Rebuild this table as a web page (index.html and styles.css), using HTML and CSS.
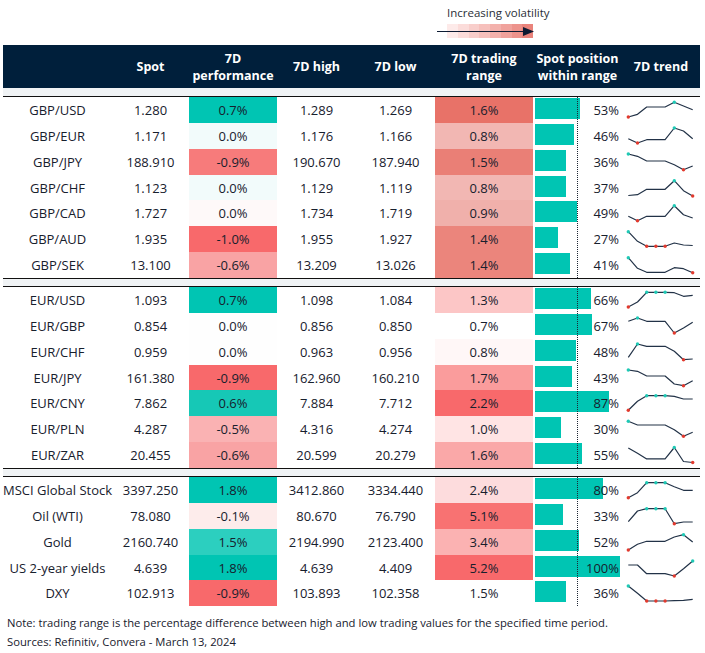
FILE: index.html
```html
<!DOCTYPE html>
<html lang="en">
<head>
<meta charset="utf-8">
<title>FX volatility table</title>
<link rel="stylesheet" href="styles.css">
</head>
<body>
<div class="legend">
  <div class="legend-title">Increasing volatility</div>
  <div class="legend-bar">
    <div class="swatches">
      <span class="s1"></span><span class="s2"></span><span class="s3"></span><span class="s4"></span><span class="s5"></span><span class="s6"></span><span class="s7"></span><span class="s8"></span>
    </div>
    <svg class="arrow" width="97" height="14" viewBox="0 0 97 14"><line x1="0" y1="7.5" x2="88" y2="7.5" stroke="#0d1b33" stroke-width="1.2"/><polygon points="86,3 97,7.5 86,12" fill="#0d1b33"/></svg>
  </div>
</div>

<div class="table">
  <div class="thead">
    <div></div>
    <div>Spot</div>
    <div>7D<br>performance</div>
    <div>7D high</div>
    <div>7D low</div>
    <div>7D trading<br>range</div>
    <div>Spot position<br>within range</div>
    <div>7D trend</div>
  </div>
  <div class="spacer first"></div>

  <div class="group sep">
    <div class="row"><div class="c">GBP/USD</div><div class="c">1.280</div><div class="c" style="background:#00c5b3">0.7%</div><div class="c">1.289</div><div class="c">1.269</div><div class="c" style="background:#e87268">1.6%</div><div class="pos"><span class="bar" style="width:53%"></span><span class="pct">53%</span></div><div class="trend"><svg width="78" height="26" viewBox="0 0 78 26"><polyline points="6.3,20 15.5,17.3 24.7,10 33.9,10 43.1,10 52.3,5.3 61.5,9 70.7,12.7"/><circle class="lo" cx="6.3" cy="20" r="1.7"/><circle class="hi" cx="52.3" cy="5.3" r="1.7"/></svg></div></div>
    <div class="row"><div class="c">GBP/EUR</div><div class="c">1.171</div><div class="c" style="background:#f2fbfb">0.0%</div><div class="c">1.176</div><div class="c">1.166</div><div class="c" style="background:#f2b7b3">0.8%</div><div class="pos"><span class="bar" style="width:46%"></span><span class="pct">46%</span></div><div class="trend"><svg width="78" height="26" viewBox="0 0 78 26"><polyline points="6.3,15.7 15.5,20 24.7,16.7 33.9,16.7 43.1,16.7 52.3,5 61.5,8 70.7,15.7"/><circle class="lo" cx="15.5" cy="20" r="1.7"/><circle class="hi" cx="52.3" cy="5" r="1.7"/></svg></div></div>
    <div class="row"><div class="c">GBP/JPY</div><div class="c">188.910</div><div class="c" style="background:#f77b7b">-0.9%</div><div class="c">190.670</div><div class="c">187.940</div><div class="c" style="background:#ea7f76">1.5%</div><div class="pos"><span class="bar" style="width:36%"></span><span class="pct">36%</span></div><div class="trend"><svg width="78" height="26" viewBox="0 0 78 26"><polyline points="6.3,5 15.5,7.3 24.7,12 33.9,12 43.1,12 52.3,15.7 61.5,20.7 70.7,17"/><circle class="hi" cx="6.3" cy="5" r="1.7"/><circle class="lo" cx="61.5" cy="20.7" r="1.7"/></svg></div></div>
    <div class="row"><div class="c">GBP/CHF</div><div class="c">1.123</div><div class="c" style="background:#f2fbfb">0.0%</div><div class="c">1.129</div><div class="c">1.119</div><div class="c" style="background:#f2b7b3">0.8%</div><div class="pos"><span class="bar" style="width:37%"></span><span class="pct">37%</span></div><div class="trend"><svg width="78" height="26" viewBox="0 0 78 26"><polyline points="6.3,20.5 15.5,19.7 24.7,14.3 33.9,14.3 43.1,14.3 52.3,5.7 61.5,15.7 70.7,21"/><circle class="hi" cx="52.3" cy="5.7" r="1.7"/><circle class="lo" cx="70.7" cy="21" r="1.7"/></svg></div></div>
    <div class="row"><div class="c">GBP/CAD</div><div class="c">1.727</div><div class="c" style="background:#fef9f9">0.0%</div><div class="c">1.734</div><div class="c">1.719</div><div class="c" style="background:#f0b0ab">0.9%</div><div class="pos"><span class="bar" style="width:49%"></span><span class="pct">49%</span></div><div class="trend"><svg width="78" height="26" viewBox="0 0 78 26"><polyline points="6.3,16.3 15.5,20.7 24.7,16.3 33.9,16.3 43.1,16.3 52.3,5.7 61.5,14.7 70.7,18"/><circle class="lo" cx="15.5" cy="20.7" r="1.7"/><circle class="hi" cx="52.3" cy="5.7" r="1.7"/></svg></div></div>
    <div class="row"><div class="c">GBP/AUD</div><div class="c">1.935</div><div class="c" style="background:#f8696b">-1.0%</div><div class="c">1.955</div><div class="c">1.927</div><div class="c" style="background:#eb857c">1.4%</div><div class="pos"><span class="bar" style="width:27%"></span><span class="pct">27%</span></div><div class="trend"><svg width="78" height="26" viewBox="0 0 78 26"><polyline points="6.3,5.7 15.5,15.3 24.7,20.3 33.9,20.3 43.1,20.3 52.3,17 61.5,19 70.7,19.5"/><circle class="hi" cx="6.3" cy="5.7" r="1.7"/><circle class="lo" cx="24.7" cy="20.3" r="1.7"/><circle class="lo" cx="33.9" cy="20.3" r="1.7"/><circle class="lo" cx="43.1" cy="20.3" r="1.7"/></svg></div></div>
    <div class="row"><div class="c">GBP/SEK</div><div class="c">13.100</div><div class="c" style="background:#f9a3a4">-0.6%</div><div class="c">13.209</div><div class="c">13.026</div><div class="c" style="background:#eb857c">1.4%</div><div class="pos"><span class="bar" style="width:41%"></span><span class="pct">41%</span></div><div class="trend"><svg width="78" height="26" viewBox="0 0 78 26"><polyline points="6.3,5.7 15.5,16.3 24.7,20.3 33.9,20.3 43.1,20.3 52.3,15.7 61.5,16.7 70.7,20.8"/><circle class="hi" cx="6.3" cy="5.7" r="1.7"/><circle class="lo" cx="70.7" cy="20.8" r="1.7"/></svg></div></div>
  </div>
  <div class="spacer"></div>

  <div class="group sep">
    <div class="row"><div class="c">EUR/USD</div><div class="c">1.093</div><div class="c" style="background:#00c5b3">0.7%</div><div class="c">1.098</div><div class="c">1.084</div><div class="c" style="background:#fcc6c6">1.3%</div><div class="pos"><span class="bar" style="width:66%"></span><span class="pct">66%</span></div><div class="trend"><svg width="78" height="26" viewBox="0 0 78 26"><polyline points="6.3,20 15.5,15 24.7,5.3 33.9,5.3 43.1,5.3 52.3,5.7 61.5,9.3 70.7,8.3"/><circle class="lo" cx="6.3" cy="20" r="1.7"/><circle class="hi" cx="24.7" cy="5.3" r="1.7"/><circle class="hi" cx="33.9" cy="5.3" r="1.7"/><circle class="hi" cx="43.1" cy="5.3" r="1.7"/></svg></div></div>
    <div class="row"><div class="c">EUR/GBP</div><div class="c">0.854</div><div class="c" style="background:#fefefe">0.0%</div><div class="c">0.856</div><div class="c">0.850</div><div class="c" style="background:#ffffff">0.7%</div><div class="pos"><span class="bar" style="width:67%"></span><span class="pct">67%</span></div><div class="trend"><svg width="78" height="26" viewBox="0 0 78 26"><polyline points="6.3,8.3 15.5,5 24.7,8.3 33.9,8.3 43.1,8.3 52.3,20 61.5,15 70.7,9.3"/><circle class="hi" cx="15.5" cy="5" r="1.7"/><circle class="lo" cx="52.3" cy="20" r="1.7"/></svg></div></div>
    <div class="row"><div class="c">EUR/CHF</div><div class="c">0.959</div><div class="c" style="background:#fefefe">0.0%</div><div class="c">0.963</div><div class="c">0.956</div><div class="c" style="background:#fff7f7">0.8%</div><div class="pos"><span class="bar" style="width:48%"></span><span class="pct">48%</span></div><div class="trend"><svg width="78" height="26" viewBox="0 0 78 26"><polyline points="6.3,18.3 15.5,5 24.7,7.3 33.9,7.3 43.1,7.3 52.3,12.3 61.5,20.7 70.7,20"/><circle class="hi" cx="15.5" cy="5" r="1.7"/><circle class="lo" cx="61.5" cy="20.7" r="1.7"/></svg></div></div>
    <div class="row"><div class="c">EUR/JPY</div><div class="c">161.380</div><div class="c" style="background:#f8696b">-0.9%</div><div class="c">162.960</div><div class="c">160.210</div><div class="c" style="background:#fa9c9c">1.7%</div><div class="pos"><span class="bar" style="width:43%"></span><span class="pct">43%</span></div><div class="trend"><svg width="78" height="26" viewBox="0 0 78 26"><polyline points="6.3,5 15.5,6.3 24.7,11 33.9,11 43.1,11 52.3,19 61.5,20.7 70.7,15.7"/><circle class="hi" cx="6.3" cy="5" r="1.7"/><circle class="lo" cx="61.5" cy="20.7" r="1.7"/></svg></div></div>
    <div class="row"><div class="c">EUR/CNY</div><div class="c">7.862</div><div class="c" style="background:#16c8b6">0.6%</div><div class="c">7.884</div><div class="c">7.712</div><div class="c" style="background:#f8696b">2.2%</div><div class="pos"><span class="bar" style="width:87%"></span><span class="pct">87%</span></div><div class="trend"><svg width="78" height="26" viewBox="0 0 78 26"><polyline points="6.3,20.3 15.5,11.3 24.7,5.7 33.9,5.7 43.1,5.7 52.3,6.3 61.5,9 70.7,9"/><circle class="lo" cx="6.3" cy="20.3" r="1.7"/><circle class="hi" cx="24.7" cy="5.7" r="1.7"/><circle class="hi" cx="33.9" cy="5.7" r="1.7"/><circle class="hi" cx="43.1" cy="5.7" r="1.7"/></svg></div></div>
    <div class="row"><div class="c">EUR/PLN</div><div class="c">4.287</div><div class="c" style="background:#fab2b3">-0.5%</div><div class="c">4.316</div><div class="c">4.274</div><div class="c" style="background:#ffe4e4">1.0%</div><div class="pos"><span class="bar" style="width:30%"></span><span class="pct">30%</span></div><div class="trend"><svg width="78" height="26" viewBox="0 0 78 26"><polyline points="6.3,5.3 15.5,9 24.7,9 33.9,9 43.1,9 52.3,13.7 61.5,20.3 70.7,16.3"/><circle class="hi" cx="6.3" cy="5.3" r="1.7"/><circle class="lo" cx="61.5" cy="20.3" r="1.7"/></svg></div></div>
    <div class="row"><div class="c">EUR/ZAR</div><div class="c">20.455</div><div class="c" style="background:#f9a3a4">-0.6%</div><div class="c">20.599</div><div class="c">20.279</div><div class="c" style="background:#faa8a8">1.6%</div><div class="pos"><span class="bar" style="width:55%"></span><span class="pct">55%</span></div><div class="trend"><svg width="78" height="26" viewBox="0 0 78 26"><polyline points="6.3,5.9 15.5,11.2 24.7,16.9 33.9,16.9 43.1,16.9 52.3,5.5 61.5,19.5 70.7,20.5"/><circle class="hi" cx="52.3" cy="5.5" r="1.7"/><circle class="lo" cx="70.7" cy="20.5" r="1.7"/></svg></div></div>
  </div>
  <div class="spacer"></div>

  <div class="group">
    <div class="row"><div class="c">MSCI Global Stock</div><div class="c">3397.250</div><div class="c" style="background:#00c5b3">1.8%</div><div class="c">3412.860</div><div class="c">3334.440</div><div class="c" style="background:#fddcdd">2.4%</div><div class="pos"><span class="bar" style="width:80%"></span><span class="pct">80%</span></div><div class="trend"><svg width="78" height="26" viewBox="0 0 78 26"><polyline points="6.3,20.7 15.5,15.7 24.7,5.7 33.9,5.7 43.1,5.7 52.3,9.7 61.5,13.3 70.7,13.3"/><circle class="lo" cx="6.3" cy="20.7" r="1.7"/><circle class="hi" cx="24.7" cy="5.7" r="1.7"/><circle class="hi" cx="33.9" cy="5.7" r="1.7"/><circle class="hi" cx="43.1" cy="5.7" r="1.7"/></svg></div></div>
    <div class="row"><div class="c">Oil (WTI)</div><div class="c">78.080</div><div class="c" style="background:#fdeceb">-0.1%</div><div class="c">80.670</div><div class="c">76.790</div><div class="c" style="background:#f87272">5.1%</div><div class="pos"><span class="bar" style="width:33%"></span><span class="pct">33%</span></div><div class="trend"><svg width="78" height="26" viewBox="0 0 78 26"><polyline points="6.3,18.7 15.5,8 24.7,5.7 33.9,5.7 43.1,5.7 52.3,20.7 61.5,19 70.7,19"/><circle class="hi" cx="24.7" cy="5.7" r="1.7"/><circle class="hi" cx="33.9" cy="5.7" r="1.7"/><circle class="hi" cx="43.1" cy="5.7" r="1.7"/><circle class="lo" cx="52.3" cy="20.7" r="1.7"/></svg></div></div>
    <div class="row"><div class="c">Gold</div><div class="c">2160.740</div><div class="c" style="background:#2ccfbf">1.5%</div><div class="c">2194.990</div><div class="c">2123.400</div><div class="c" style="background:#fbb2b2">3.4%</div><div class="pos"><span class="bar" style="width:52%"></span><span class="pct">52%</span></div><div class="trend"><svg width="78" height="26" viewBox="0 0 78 26"><polyline points="6.3,21 15.5,15.3 24.7,12.3 33.9,12.3 43.1,12.3 52.3,8 61.5,5.7 70.7,13"/><circle class="lo" cx="6.3" cy="21" r="1.7"/><circle class="hi" cx="61.5" cy="5.7" r="1.7"/></svg></div></div>
    <div class="row"><div class="c">US 2-year yields</div><div class="c">4.639</div><div class="c" style="background:#00c5b3">1.8%</div><div class="c">4.639</div><div class="c">4.409</div><div class="c" style="background:#f8696b">5.2%</div><div class="pos"><span class="bar" style="width:100%"></span><span class="pct">100%</span></div><div class="trend"><svg width="78" height="26" viewBox="0 0 78 26"><polyline points="6.3,10 15.5,10 24.7,18.7 33.9,18.7 43.1,18.7 52.3,21 61.5,13.7 70.7,6"/><circle class="lo" cx="52.3" cy="21" r="1.7"/><circle class="hi" cx="70.7" cy="6" r="1.7"/></svg></div></div>
    <div class="row"><div class="c">DXY</div><div class="c">102.913</div><div class="c" style="background:#f8696b">-0.9%</div><div class="c">103.893</div><div class="c">102.358</div><div class="c" style="background:#ffffff">1.5%</div><div class="pos"><span class="bar" style="width:36%"></span><span class="pct">36%</span></div><div class="trend"><svg width="78" height="26" viewBox="0 0 78 26"><polyline points="6.3,6 15.5,13.3 24.7,21 33.9,21 43.1,21 52.3,20.6 61.5,20.3 70.7,19.3"/><circle class="hi" cx="6.3" cy="6" r="1.7"/><circle class="lo" cx="24.7" cy="21" r="1.7"/><circle class="lo" cx="33.9" cy="21" r="1.7"/><circle class="lo" cx="43.1" cy="21" r="1.7"/></svg></div></div>
  </div>
</div>

<div class="note">
  <p>Note: trading range is the percentage difference between high and low trading values for the specified time period.</p>
  <p>Sources: Refinitiv, Convera - March 13, 2024</p>
</div>
</body>
</html>
```

FILE: styles.css
```css
* { box-sizing: border-box; }

body {
  margin: 0;
  background: #ffffff;
  color: #17202d;
  font-family: "Open Sans", "Noto Sans", sans-serif;
}

/* legend */
.legend {
  margin-left: 437px;
  padding-top: 5px;
  width: 110px;
}
.legend-title {
  padding-left: 10px;
  font-size: 11.5px;
  line-height: 16px;
  color: #2a2f38;
  white-space: nowrap;
}
.legend-bar {
  display: grid;
  margin-top: 3px;
  height: 14px;
  width: 97px;
}
.swatches {
  grid-area: 1 / 1;
  display: flex;
  margin-left: 10px;
  width: 86px;
  height: 14px;
}
.swatches span { flex: 1; }
.s1 { background: #fdeae9; }
.s2 { background: #fbdcda; }
.s3 { background: #f8cecb; }
.s4 { background: #f6c0bc; }
.s5 { background: #f3b1ac; }
.s6 { background: #f0a29c; }
.s7 { background: #ed938c; }
.s8 { background: #e9837b; }
.arrow { grid-area: 1 / 1; display: block; }

/* table */
.table {
  margin: 7px 0 0 3px;
  width: 697px;
}
.thead,
.row {
  display: grid;
  grid-template-columns: 109px 77px 88px 79px 79px 98px 89px 78px;
}
.thead {
  height: 43px;
  background: #001f3b;
  color: #ffffff;
  font-weight: 700;
  font-size: 12.5px;
  line-height: 17px;
}
.thead div {
  display: flex;
  align-items: center;
  justify-content: center;
  text-align: center;
  white-space: nowrap;
}
.spacer {
  height: 7px;
  background: #f0f3f5;
}
.spacer.first { height: 8px; }

.group {
  position: relative;
  border-top: 1px solid #111111;
}
.group.sep { border-bottom: 1px solid #111111; }
.group::after {
  content: "";
  position: absolute;
  left: 574px;
  top: 0;
  bottom: 0;
  border-left: 1px dotted #1d2633;
}

.row {
  height: 25.86px;
  font-size: 13px;
}
.c {
  display: flex;
  align-items: center;
  justify-content: center;
  white-space: nowrap;
}
.pos {
  display: grid;
  grid-template-columns: 85px;
  padding: 0 2px;
}
.bar {
  grid-area: 1 / 1;
  align-self: start;
  margin-top: 1px;
  height: 21px;
  background: #00c5b3;
}
.pct {
  grid-area: 1 / 1;
  justify-self: end;
  align-self: center;
  padding-right: 1px;
}
.trend svg {
  display: block;
  overflow: visible;
}
.trend polyline {
  fill: none;
  stroke: #223247;
  stroke-width: 1.2;
  stroke-linejoin: round;
}
.trend .hi { fill: #1fc9b5; }
.trend .lo { fill: #e23a2e; }

/* note */
.note {
  padding: 7px 0 0 7px;
  font-size: 11.25px;
  line-height: 19px;
  color: #17202d;
}
.note p { margin: 0; white-space: nowrap; }
```
